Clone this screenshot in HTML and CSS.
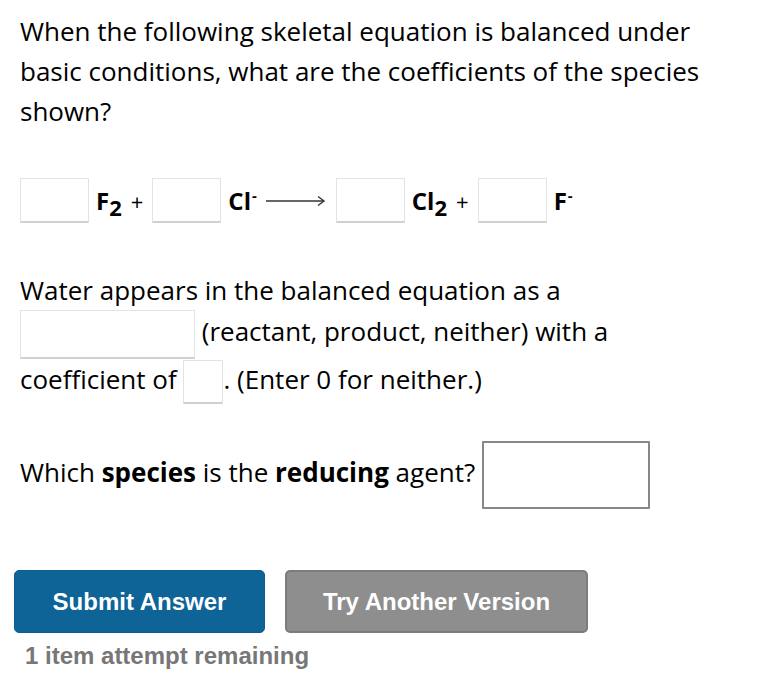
FILE: index.html
```html
<!DOCTYPE html>
<html lang="en">
<head>
<meta charset="utf-8">
<title>Balancing question</title>
<link rel="stylesheet" href="styles.css">
</head>
<body>
<div class="page">
  <p class="question">When the following skeletal equation is balanced under basic conditions, what are the coefficients of the species shown?</p>

  <div class="equation">
    <input class="coef" type="text" aria-label="coefficient F2">
    <span class="species">F<sub>2</sub></span><span class="plus">+</span>
    <input class="coef" type="text" aria-label="coefficient Cl-">
    <span class="species">Cl<sup>-</sup></span>
    <svg class="arrow" width="60" height="12" viewBox="0 0 60 12" aria-hidden="true">
      <line x1="0" y1="6" x2="58" y2="6" stroke="#333" stroke-width="1.6"/>
      <polyline points="52,1.5 58,6 52,10.5" fill="none" stroke="#333" stroke-width="1.4"/>
    </svg>
    <input class="coef" type="text" aria-label="coefficient Cl2">
    <span class="species">Cl<sub>2</sub></span><span class="plus">+</span>
    <input class="coef" type="text" aria-label="coefficient F-">
    <span class="species last">F<sup>-</sup></span>
  </div>

  <p class="water">Water appears in the balanced equation as a<br><input class="wide" type="text" aria-label="reactant product neither"> (reactant, product, neither) with a<br>coefficient of <input class="small" type="text" aria-label="water coefficient">. (Enter 0 for neither.)</p>

  <p class="agent">Which <b>species</b> is the <b>reducing</b> agent? <input class="agent-box" type="text" aria-label="reducing agent"></p>

  <div class="actions">
    <button class="btn btn-primary" type="button">Submit Answer</button>
    <button class="btn btn-secondary" type="button">Try Another Version</button>
  </div>
  <p class="attempts">1 item attempt remaining</p>
</div>
</body>
</html>
```

FILE: styles.css
```css
html, body {
  margin: 0;
  padding: 0;
  background: #fff;
}

.page {
  padding: 11px 20px 0 20px;
  font-family: "Open Sans", "DejaVu Sans", sans-serif;
  color: #000;
}

.question {
  margin: 0;
  font-size: 26px;
  line-height: 40px;
  width: 710px;
}

input {
  font: inherit;
  margin: 0;
  padding: 0;
  box-sizing: border-box;
  background: #fff;
  border: 1px solid #e3e3e3;
  border-bottom: 2px solid #d0d0d0;
  border-radius: 1px;
  outline: none;
}

.equation {
  display: flex;
  align-items: center;
  margin-top: 47px;
  height: 45px;
}

.coef {
  width: 69px;
  height: 45px;
}

.species {
  font-weight: 700;
  font-size: 24px;
  color: #000;
  margin-left: 7px;
  line-height: 1;
}

.species sub {
  font-size: 22px;
  vertical-align: -6px;
  line-height: 0;
}

.species sup {
  font-size: 15px;
  vertical-align: 9px;
  line-height: 0;
  margin-left: 1px;
}

.plus {
  font-size: 22px;
  margin: 0 9px 0 9px;
  line-height: 1;
}

.arrow {
  margin: 0 10px 0 9px;
  display: block;
}

.species.last {
  margin-left: 7px;
}

.water {
  margin: 47px 0 0 0;
  font-size: 26px;
  line-height: 40px;
}

.wide {
  width: 175px;
  height: 49px;
  vertical-align: middle;
}

.small {
  width: 40px;
  height: 44px;
  vertical-align: middle;
}

.agent {
  margin: 37px 0 0 0;
  font-size: 26px;
  line-height: 40px;
}

.agent b {
  font-weight: 700;
}

.agent-box {
  width: 168px;
  height: 68px;
  border: 2px solid #888;
  vertical-align: middle;
}

.actions {
  display: flex;
  gap: 20px;
  margin: 61px 0 0 -6px;
}

.btn {
  font-family: "Liberation Sans", Arial, sans-serif;
  font-weight: 700;
  font-size: 24px;
  letter-spacing: 0;
  color: #fff;
  height: 63px;
  border-radius: 5px;
  cursor: pointer;
  padding: 0;
}

.btn-primary {
  width: 251px;
  background: #0e6397;
  border: 1px solid #0d5d8e;
}

.btn-secondary {
  width: 303px;
  background: #8e8e8e;
  border: 2px solid #7c7c7c;
}

.attempts {
  margin: 7px 0 0 5px;
  font-family: "Liberation Sans", Arial, sans-serif;
  font-weight: 700;
  font-size: 24px;
  color: #777;
  line-height: 32px;
}
```
